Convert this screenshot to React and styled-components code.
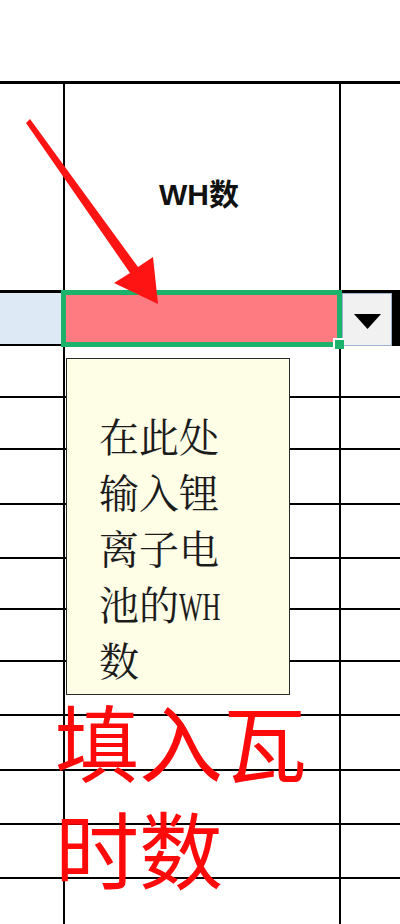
import React from "react";
import styled, { createGlobalStyle } from "styled-components";

const GlobalStyle = createGlobalStyle`
  *, *::before, *::after {
    box-sizing: border-box;
  }

  body {
    margin: 0;
    background: #fff;
    font-family: "Liberation Sans", "Noto Sans CJK SC", sans-serif;
  }
`;

// content heights of the plain rows under the selected one
const rowHeights = [50, 50, 53, 52, 49, 50, 52, 53, 52, 52, 50];

export default function App() {
  return (
    <>
      <GlobalStyle />
      <Page>
        <TopMargin />
        <Sheet>
          <Row $h={209}>
            <Cell $line={3} />
            <HeaderCell $line={3}>WH数</HeaderCell>
            <Cell $line={3} $last />
          </Row>

          <Row $h={53}>
            <Cell $line={2} $bg="#dde9f4" />
            <ActiveCell $line={2}>
              <SelectionFrame>
                <FillHandle />
              </SelectionFrame>
            </ActiveCell>
            <DropdownCell $last>
              <DropdownButton aria-label="Open list">
                <svg width="27" height="15" viewBox="0 0 27 15">
                  <polygon points="0,0 27,0 13.5,15" fill="#000" />
                </svg>
              </DropdownButton>
            </DropdownCell>
          </Row>

          {rowHeights.map((h, i) => (
            <Row key={i} $h={h + 2}>
              <Cell $line={2} />
              <Cell $line={2} />
              <Cell $line={2} $last />
            </Row>
          ))}
        </Sheet>

        <Comment>
          <CommentLine>在此处</CommentLine>
          <CommentLine>输入锂</CommentLine>
          <CommentLine>离子电</CommentLine>
          <CommentLine>
            池的<HalfWidth>WH</HalfWidth>
          </CommentLine>
          <CommentLine>数</CommentLine>
        </Comment>

        <Callout>
          <CalloutLine>填入瓦</CalloutLine>
          <CalloutLine>时数</CalloutLine>
        </Callout>

        <Arrow viewBox="0 100 170 210" aria-hidden="true">
          <polygon
            points="26,123 30,119 138,267 153,257 158,304 114,283 130,273"
            fill="#ff1414"
          />
        </Arrow>
      </Page>
    </>
  );
}

const Page = styled.div`
  position: relative;
  width: 400px;
  height: 924px;
  overflow: hidden;
  background: #fff;
`;

const TopMargin = styled.div`
  height: 81px;
`;

const Sheet = styled.div`
  border-top: 3px solid #000;
`;

const Row = styled.div`
  display: grid;
  grid-template-columns: 65px 276px 59px;
  height: ${(p) => p.$h}px;
`;

const Cell = styled.div`
  position: relative;
  background: ${(p) => p.$bg || "#fff"};
  border-right: ${(p) => (p.$last ? "none" : "2px solid #000")};
  border-bottom: ${(p) => (p.$line ? `${p.$line}px solid #000` : "none")};
`;

const HeaderCell = styled(Cell)`
  display: flex;
  align-items: center;
  justify-content: center;
  padding: 10px 6px 0 0;
  font-family: "Liberation Sans", "Noto Sans CJK SC", sans-serif;
  font-weight: 700;
  font-size: 30px;
  color: #111;
`;

const ActiveCell = styled(Cell)`
  z-index: 2;
`;

const SelectionFrame = styled.div`
  position: absolute;
  top: -3px;
  left: -4px;
  right: -3px;
  bottom: -3px;
  border: 5px solid #1db26b;
  background: #fe7b82;
`;

const FillHandle = styled.div`
  position: absolute;
  right: -7px;
  bottom: -7px;
  width: 11px;
  height: 11px;
  background: #1db26b;
  border-top: 2px solid #fff;
  border-left: 2px solid #fff;
`;

const DropdownCell = styled(Cell)`
  display: flex;
  background: #000;
  padding-left: 1px;
  padding-right: 8px;
`;

const DropdownButton = styled.div`
  flex: 1;
  display: flex;
  align-items: center;
  justify-content: center;
  background: #f1f1f1;
  border: 1px solid #9fb0cc;
  padding-top: 3px;
`;

const Comment = styled.div`
  position: absolute;
  left: 66px;
  top: 358px;
  width: 224px;
  height: 337px;
  padding: 52px 0 0 32px;
  background: #fefde5;
  border: 1.5px solid #2a2a2a;
  z-index: 3;
`;

const CommentLine = styled.div`
  font-family: "Liberation Serif", "Noto Serif CJK SC", "Noto Sans CJK SC", serif;
  font-size: 40px;
  line-height: 56px;
  color: #1c1c1c;
  white-space: nowrap;
`;

const HalfWidth = styled.span`
  display: inline-block;
  transform: scaleX(0.62);
  transform-origin: left center;
`;

const Callout = styled.div`
  position: absolute;
  left: 55px;
  top: 693px;
  display: flex;
  flex-direction: column;
  gap: 14px;
  z-index: 4;
`;

const CalloutLine = styled.div`
  font-family: "Noto Sans CJK SC", sans-serif;
  font-size: 84px;
  line-height: 93px;
  color: #ff0a0a;
  white-space: nowrap;
`;

const Arrow = styled.svg`
  position: absolute;
  left: 0;
  top: 100px;
  width: 170px;
  height: 210px;
  z-index: 5;
`;
